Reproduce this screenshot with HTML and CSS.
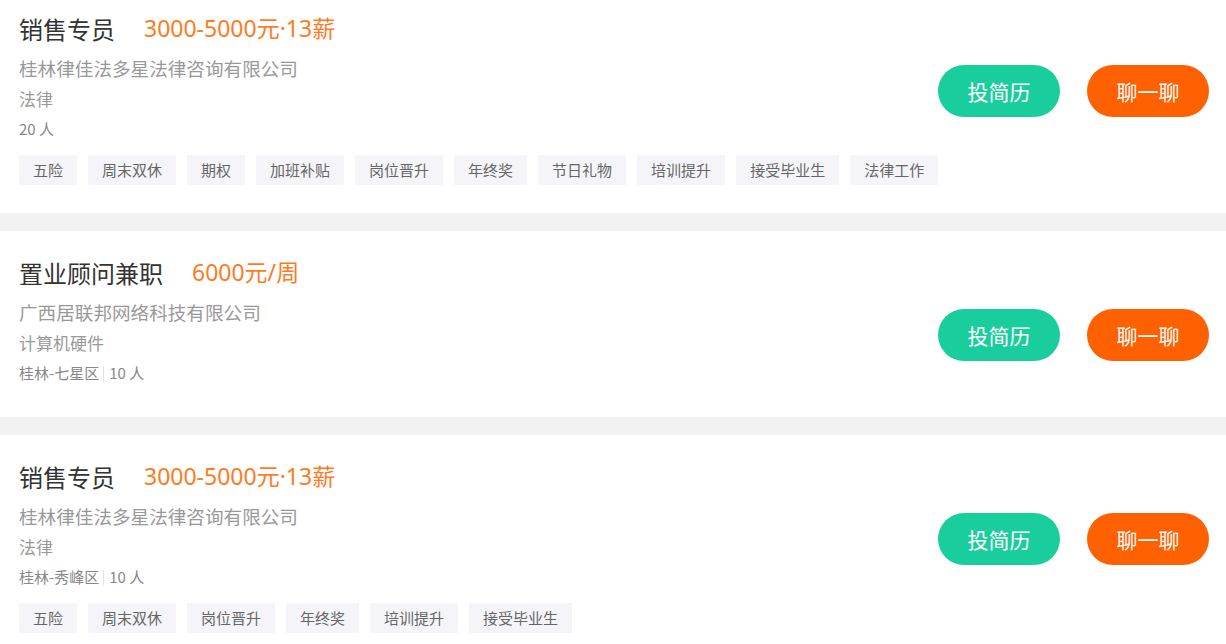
FILE: index.html
```html
<!DOCTYPE html>
<html lang="zh-CN">
<head>
    <meta charset="UTF-8">
    <meta name="viewport" content="width=device-width, initial-scale=1.0">
    <title>职位列表</title>
    <link rel="stylesheet" href="styles.css">
</head>
<body>
    <div class="job-list">
        <div class="job-card">
            <div class="job-main">
                <div class="job-info">
                    <div class="job-title">
                        <span class="job-name">销售专员</span>
                        <span class="job-salary">3000-5000元·13薪</span>
                    </div>
                    <div class="company">桂林律佳法多星法律咨询有限公司</div>
                    <div class="industry">法律</div>
                    <div class="meta"><span>20 人</span></div>
                </div>
                <div class="job-actions">
                    <button class="btn btn-apply">投简历</button>
                    <button class="btn btn-chat">聊一聊</button>
                </div>
            </div>
            <div class="tags">
                <span class="tag">五险</span>
                <span class="tag">周末双休</span>
                <span class="tag">期权</span>
                <span class="tag">加班补贴</span>
                <span class="tag">岗位晋升</span>
                <span class="tag">年终奖</span>
                <span class="tag">节日礼物</span>
                <span class="tag">培训提升</span>
                <span class="tag">接受毕业生</span>
                <span class="tag">法律工作</span>
            </div>
        </div>

        <div class="job-card">
            <div class="job-main">
                <div class="job-info">
                    <div class="job-title">
                        <span class="job-name">置业顾问兼职</span>
                        <span class="job-salary">6000元/周</span>
                    </div>
                    <div class="company">广西居联邦网络科技有限公司</div>
                    <div class="industry">计算机硬件</div>
                    <div class="meta"><span>桂林-七星区</span><i class="sep"></i><span>10 人</span></div>
                </div>
                <div class="job-actions">
                    <button class="btn btn-apply">投简历</button>
                    <button class="btn btn-chat">聊一聊</button>
                </div>
            </div>
        </div>

        <div class="job-card">
            <div class="job-main">
                <div class="job-info">
                    <div class="job-title">
                        <span class="job-name">销售专员</span>
                        <span class="job-salary">3000-5000元·13薪</span>
                    </div>
                    <div class="company">桂林律佳法多星法律咨询有限公司</div>
                    <div class="industry">法律</div>
                    <div class="meta"><span>桂林-秀峰区</span><i class="sep"></i><span>10 人</span></div>
                </div>
                <div class="job-actions">
                    <button class="btn btn-apply">投简历</button>
                    <button class="btn btn-chat">聊一聊</button>
                </div>
            </div>
            <div class="tags">
                <span class="tag">五险</span>
                <span class="tag">周末双休</span>
                <span class="tag">岗位晋升</span>
                <span class="tag">年终奖</span>
                <span class="tag">培训提升</span>
                <span class="tag">接受毕业生</span>
            </div>
        </div>
    </div>
</body>
</html>
```

FILE: styles.css
```css
body {
    margin: 0;
    background-color: #f2f2f2;
    font-family: "Noto Sans CJK SC", "Noto Sans", sans-serif;
    overflow: hidden;
}
.job-list {
    margin-top: -13px;
    display: flex;
    flex-direction: column;
    gap: 18px;
}
.job-card {
    background: white;
    padding: 28px 17px 28px 19px;
}
.job-main {
    display: flex;
    justify-content: space-between;
    align-items: flex-start;
}
.job-title {
    height: 27px;
    display: flex;
    align-items: center;
    gap: 29px;
}
.job-name {
    font-size: 24px;
    line-height: 27px;
    color: #333;
}
.job-salary {
    font-family: "Noto Sans", "Noto Sans CJK SC", sans-serif;
    font-size: 23px;
    line-height: 27px;
    color: #ff7b1f;
}
.company {
    margin-top: 13px;
    font-size: 18.6px;
    line-height: 26px;
    color: #999;
}
.industry {
    margin-top: 6px;
    font-size: 17px;
    line-height: 24px;
    color: #999;
}
.meta {
    margin-top: 7px;
    margin-bottom: 5px;
    font-size: 15px;
    line-height: 22px;
    height: 22px;
    color: #888;
    display: flex;
    align-items: center;
}
.sep {
    width: 1px;
    height: 15px;
    background-color: #e3e3e3;
    margin: 0 5px 0 4px;
}
.tags {
    margin-top: 10px;
    display: flex;
    gap: 11px;
}
.tag {
    height: 30px;
    line-height: 30px;
    padding: 0 14px;
    font-size: 15px;
    color: #666;
    background-color: #f5f5f9;
    white-space: nowrap;
}
.job-actions {
    margin-top: 50px;
    display: flex;
    gap: 27px;
}
.btn {
    width: 122px;
    height: 52px;
    border: none;
    border-radius: 26px;
    color: white;
    font-size: 21px;
    font-family: "Noto Sans CJK SC", sans-serif;
    cursor: pointer;
}
.btn-apply {
    background-color: #1acd9c;
}
.btn-chat {
    background-color: #ff6000;
}
```
